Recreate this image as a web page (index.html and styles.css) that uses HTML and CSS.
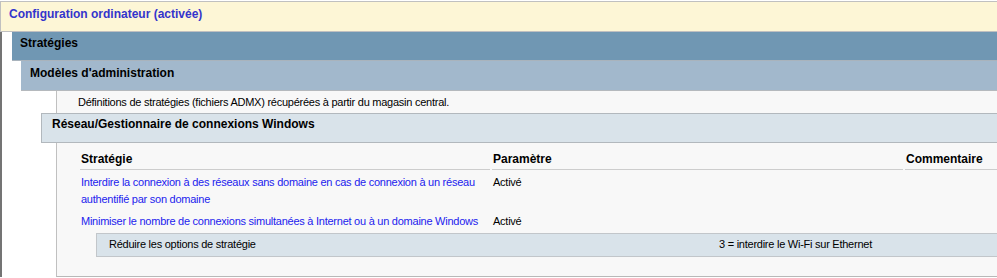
FILE: index.html
```html
<!DOCTYPE html>
<html>

<head>
    <title>Configuration ordinateur</title>
    <link rel="stylesheet" href="styles.css">
</head>

<body>
    <div class="he0">Configuration ordinateur (activée)</div>

    <div class="tree">
        <div class="he1">Stratégies</div>

        <div class="level1">
            <div class="he2">Modèles d'administration</div>

            <div class="level2">
                <div class="note">Définitions de stratégies (fichiers ADMX) récupérées à partir du magasin central.</div>

                <div class="he3">Réseau/Gestionnaire de connexions Windows</div>

                <div class="section">
                    <table class="policies">
                        <colgroup>
                            <col class="col-name">
                            <col class="col-value">
                            <col>
                        </colgroup>
                        <thead>
                            <tr>
                                <th>Stratégie</th>
                                <th>Paramètre</th>
                                <th>Commentaire</th>
                            </tr>
                        </thead>
                        <tbody>
                            <tr>
                                <td><span class="policy-link">Interdire la connexion à des réseaux sans domaine en cas de connexion à un réseau authentifié par son domaine</span></td>
                                <td>Activé</td>
                                <td></td>
                            </tr>
                            <tr>
                                <td><span class="policy-link">Minimiser le nombre de connexions simultanées à Internet ou à un domaine Windows</span></td>
                                <td>Activé</td>
                                <td></td>
                            </tr>
                            <tr class="sub-row">
                                <td colspan="3">
                                    <div class="options">
                                        <span class="option-label">Réduire les options de stratégie</span>
                                        <span class="option-value">3 = interdire le Wi-Fi sur Ethernet</span>
                                    </div>
                                </td>
                            </tr>
                        </tbody>
                    </table>
                </div>
            </div>
        </div>
    </div>
</body>

</html>
```

FILE: styles.css
```css
:root {
    --header-bg: #fdf6d6;
    --band-dark: #7097b3;
    --band-light: #a2b8cc;
    --band-pale: #d9e3ea;
    --panel: #f8f8f8;
    --border: #c0c0c0;
    --frame: #747474;
    --link: #2222ee;
    --title: #3434cc;
    --text: #000;
}

* {
    margin: 0;
    padding: 0;
    box-sizing: border-box;
}

html,
body {
    overflow: hidden;
}

body {
    padding-top: 1px;
    font-family: 'Liberation Sans', Arial, sans-serif;
    font-size: 11px;
    color: var(--text);
    background: white;
}

/* Section headers, one level per indent */
.he0,
.he1,
.he2,
.he3 {
    font-size: 12px;
    font-weight: bold;
    line-height: 16px;
    white-space: nowrap;
}

.he0 {
    padding: 4px 8px 9px;
    color: var(--title);
    background: var(--header-bg);
    border: 1px solid var(--border);
    border-right: none;
}

.tree {
    border-left: 2px solid var(--frame);
    padding-left: 10px;
}

.he1 {
    padding: 3px 8px 9px;
    background: var(--band-dark);
    border-bottom: 1px solid #a9b3bc;
}

.level1 {
    margin-left: 9px;
}

.he2 {
    padding: 4px 9px 9px;
    background: var(--band-light);
    border-bottom: 1px solid #b5b9bd;
}

.level2 {
    margin-left: 20px;
}

.note {
    margin-left: 15px;
    padding: 3px 0 3px 21px;
    line-height: 16px;
    letter-spacing: -0.25px;
    background: var(--panel);
    border-left: 1px solid var(--border);
}

.he3 {
    padding: 2px 10px 10px;
    background: var(--band-pale);
    border: 1px solid #b2b8bd;
    border-right: none;
}

.section {
    margin-left: 15px;
    padding: 8px 0 18px 21px;
    background: var(--panel);
    border-left: 1px solid var(--border);
    border-bottom: 1px solid #b8b8b8;
}

/* Policy table */
.policies {
    width: calc(100% + 40px);
    table-layout: fixed;
    border-collapse: separate;
    border-spacing: 2px 0;
}

.col-name {
    width: 410px;
}

.col-value {
    width: 411px;
}

.policies th {
    padding: 0 1px 2px;
    font-size: 12px;
    font-weight: bold;
    line-height: 16px;
    text-align: left;
    border-bottom: 1px solid #cdcdcd;
}

.policies td {
    padding: 4px 1px 1px;
    line-height: 17px;
    letter-spacing: -0.25px;
    vertical-align: top;
}

.policy-link {
    color: var(--link);
}

.policies .sub-row td {
    padding: 2px 0 1px;
}

.options {
    display: flex;
    margin-left: 16px;
    padding: 2px 12px 3px;
    white-space: nowrap;
    background: var(--band-pale);
    border: 1px solid #c2c6ca;
    border-right: none;
}

.option-label {
    width: 610px;
}
```
